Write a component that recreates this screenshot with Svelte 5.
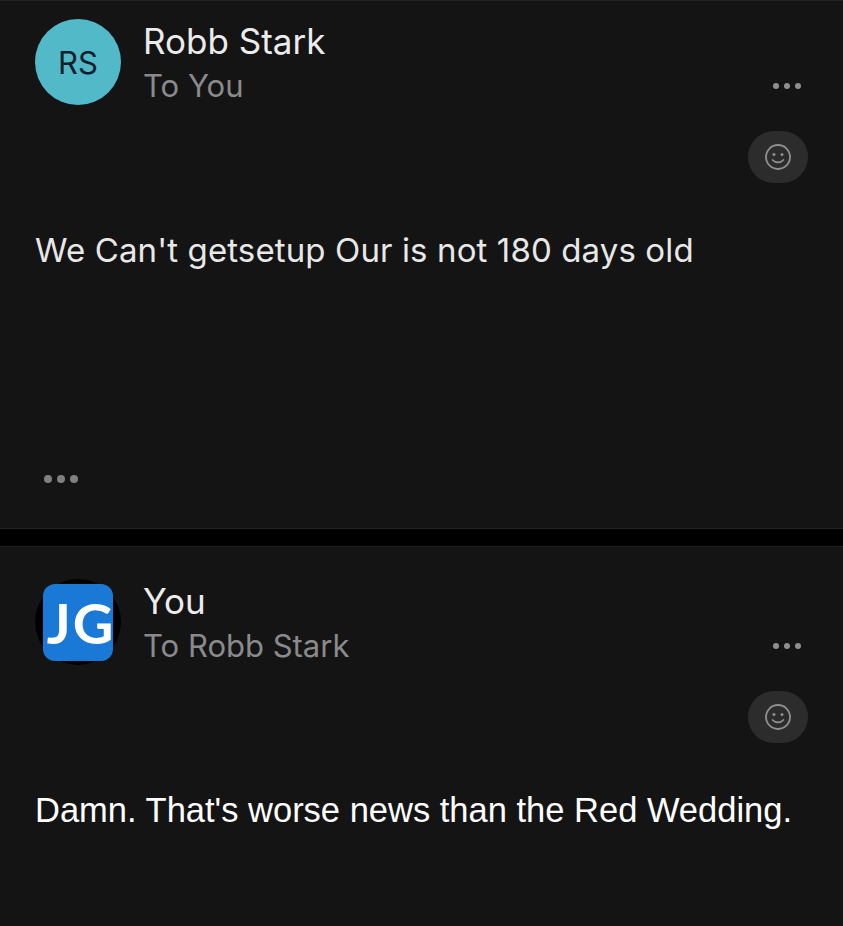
<script>
  const messages = [
    {
      id: 1,
      initials: "RS",
      sender: "Robb Stark",
      recipient: "To You",
      body: "We Can't getsetup Our is not 180 days old",
      collapsed: true,
    },
    {
      id: 2,
      initials: "JG",
      sender: "You",
      recipient: "To Robb Stark",
      body: "Damn. That's worse news than the Red Wedding.",
      collapsed: false,
    },
  ];
</script>

<main class="thread">
  {#each messages as msg (msg.id)}
    <article class="message" class:message--open={!msg.collapsed}>
      <header class="head">
        {#if msg.initials === "RS"}
          <div class="avatar avatar--teal">{msg.initials}</div>
        {:else}
          <div class="avatar avatar--photo"><span class="photo-tile">{msg.initials}</span></div>
        {/if}
        <div class="names">
          <div class="sender">{msg.sender}</div>
          <div class="recipient">{msg.recipient}</div>
        </div>
        <div class="actions">
          <button class="more" aria-label="More">
            <span></span><span></span><span></span>
          </button>
          <button class="react" aria-label="React">
            <svg width="28" height="28" viewBox="0 0 28 28" fill="none" stroke="currentColor" stroke-width="1.8" stroke-linecap="round">
              <circle cx="14" cy="14" r="12" />
              <circle cx="10" cy="11.5" r="1.5" fill="currentColor" stroke="none" />
              <circle cx="18" cy="11.5" r="1.5" fill="currentColor" stroke="none" />
              <path d="M8.6 17c1.4 1.6 3.2 2.4 5.4 2.4s4-.8 5.4-2.4" />
            </svg>
          </button>
        </div>
      </header>

      <p class="body" class:body--bright={!msg.collapsed}>{msg.body}</p>

      {#if msg.collapsed}
        <div class="trim"><span></span><span></span><span></span></div>
      {/if}
    </article>
  {/each}
</main>

<style>
  :global(body) {
    margin: 0;
    background: #000;
  }

  .thread {
    width: 843px;
    height: 926px;
    overflow: hidden;
    display: flex;
    flex-direction: column;
    gap: 17px;
    font-family: Inter, "Liberation Sans", sans-serif;
  }

  .message {
    box-sizing: border-box;
    height: 529px;
    padding: 18px 35px 0 35px;
    background: #141415;
    border-top: 1px solid #222223;
    border-bottom: 1px solid #222223;
  }

  .message--open {
    flex: 1;
    border-bottom: none;
    padding-top: 32px;
  }

  .head {
    display: flex;
    align-items: flex-start;
    height: 209px;
  }

  .avatar {
    width: 86px;
    height: 86px;
    border-radius: 50%;
    flex-shrink: 0;
    display: flex;
    align-items: center;
    justify-content: center;
  }

  .avatar--teal {
    background: #52b9c9;
    color: #10202b;
    font-size: 31px;
  }

  .avatar--photo {
    background: #000;
  }

  .photo-tile {
    box-sizing: border-box;
    width: 70px;
    height: 77px;
    padding-left: 6px;
    border-radius: 12px;
    background: #1a78d6;
    color: #fff;
    font-family: Lato, sans-serif;
    font-size: 56px;
    font-weight: 700;
    letter-spacing: 2px;
    display: flex;
    align-items: center;
    justify-content: center;
  }

  .names {
    flex: 1;
    margin-left: 22px;
    margin-top: 1px;
  }

  .sender {
    font-size: 35px;
    line-height: 42px;
    color: #ececec;
  }

  .recipient {
    font-size: 31px;
    line-height: 40px;
    margin-top: 4px;
    color: #8a8a8c;
  }

  .actions {
    display: flex;
    flex-direction: column;
    align-items: center;
    width: 60px;
  }

  .more {
    display: flex;
    gap: 5px;
    margin-top: 64px;
    margin-left: 18px;
    padding: 0;
    border: none;
    background: none;
  }

  .more span {
    width: 6px;
    height: 6px;
    border-radius: 50%;
    background: #8f8f90;
  }

  .react {
    width: 60px;
    height: 52px;
    margin-top: 42px;
    padding: 0;
    border: none;
    border-radius: 26px;
    background: #2c2c2d;
    color: #8f8f90;
    display: flex;
    align-items: center;
    justify-content: center;
  }

  .body {
    margin: 0;
    font-size: 33px;
    letter-spacing: 0.12px;
    line-height: 44px;
    color: #e8e8e8;
  }

  .body--bright {
    font-family: "Liberation Sans", sans-serif;
    font-size: 34.5px;
    letter-spacing: 0;
    color: #fff;
  }

  .trim {
    display: flex;
    gap: 5px;
    margin-top: 203px;
    margin-left: 9px;
  }

  .trim span {
    width: 8px;
    height: 8px;
    border-radius: 50%;
    background: #808081;
  }
</style>
